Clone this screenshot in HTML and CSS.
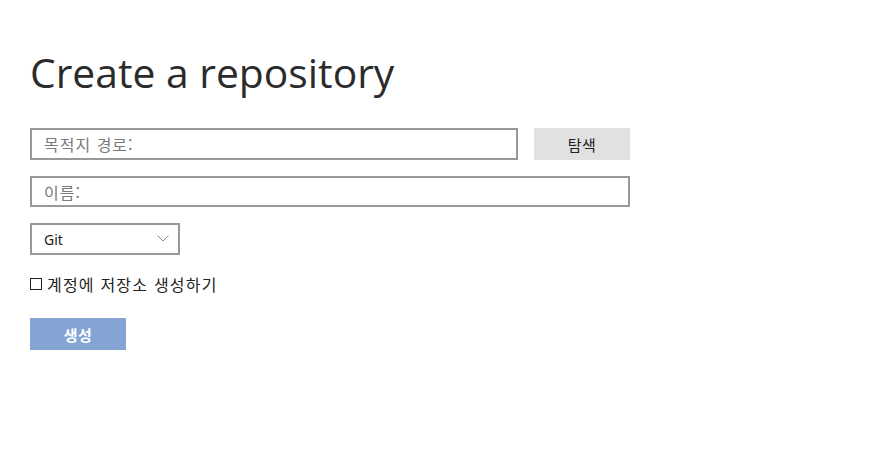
FILE: index.html
```html
<!DOCTYPE html>
<html lang="ko">
<head>
<meta charset="utf-8">
<link rel="stylesheet" href="styles.css">
</head>
<body>
<main class="page">
  <h1 class="title">Create a repository</h1>
  <div class="row">
    <div class="field field-path"><span class="placeholder">목적지 경로:</span></div>
    <div class="btn-browse">탐색</div>
  </div>
  <div class="field field-name"><span class="placeholder">이름:</span></div>
  <div class="select">
    <span class="select-value">Git</span>
    <svg class="chevron" width="12" height="7" viewBox="0 0 12 7"><path d="M0.5 0.5 L6 6 L11.5 0.5" fill="none" stroke="#8a8a8a" stroke-width="1"/></svg>
  </div>
  <label class="check">
    <span class="box"></span>
    <span class="check-label">계정에 저장소 생성하기</span>
  </label>
  <div class="btn-create">생성</div>
</main>
</body>
</html>
```
FILE: styles.css
```css
html, body {
  margin: 0;
  padding: 0;
  background: #fff;
}
body {
  font-family: "Noto Sans", "Noto Sans CJK KR", sans-serif;
  color: #222;
}
.page {
  padding: 44px 30px 0 30px;
  display: flex;
  flex-direction: column;
  align-items: flex-start;
}
.title {
  margin: 0;
  font-family: "Open Sans", "Noto Sans CJK KR", sans-serif;
  font-weight: 400;
  font-size: 40.8px;
  line-height: 56px;
  color: #2b2b2b;
}
.row {
  margin-top: 28px;
  display: flex;
  gap: 16px;
}
.field {
  box-sizing: border-box;
  height: 32px;
  border: 2px solid #999;
  display: flex;
  align-items: center;
  padding-left: 12px;
  font-family: "Noto Sans CJK KR", sans-serif;
  font-size: 16px;
  letter-spacing: 1px;
}
.placeholder {
  color: #7a7a7a;
}
.field-path { width: 488px; }
.field-name { width: 600px; margin-top: 16px; height: 31px; }
.btn-browse {
  width: 96px;
  height: 32px;
  background: #e1e1e1;
  display: flex;
  align-items: center;
  justify-content: center;
  font-family: "Noto Sans CJK KR", sans-serif;
  font-size: 15px;
  letter-spacing: 0.5px;
  color: #222;
}
.select {
  box-sizing: border-box;
  margin-top: 16px;
  width: 150px;
  height: 32px;
  border: 2px solid #999;
  display: flex;
  align-items: center;
  justify-content: space-between;
  padding: 0 9px 0 12px;
  font-family: "Noto Sans", sans-serif;
  font-size: 14px;
  color: #222;
}
.chevron { display: block; margin-top: -2px; }
.check {
  margin-top: 17px;
  display: flex;
  align-items: center;
  gap: 5px;
  font-family: "Noto Sans CJK KR", sans-serif;
  font-size: 16px;
  letter-spacing: 1.2px;
  color: #222;
}
.box {
  box-sizing: border-box;
  width: 12px;
  height: 12px;
  border: 1px solid #222;
}
.btn-create {
  margin-top: 22px;
  width: 96px;
  height: 32px;
  background: #84a4d4;
  color: #fff;
  font-weight: 700;
  display: flex;
  align-items: center;
  justify-content: center;
  font-family: "Noto Sans CJK KR", sans-serif;
  font-size: 15px;
  letter-spacing: 0.5px;
}
```
